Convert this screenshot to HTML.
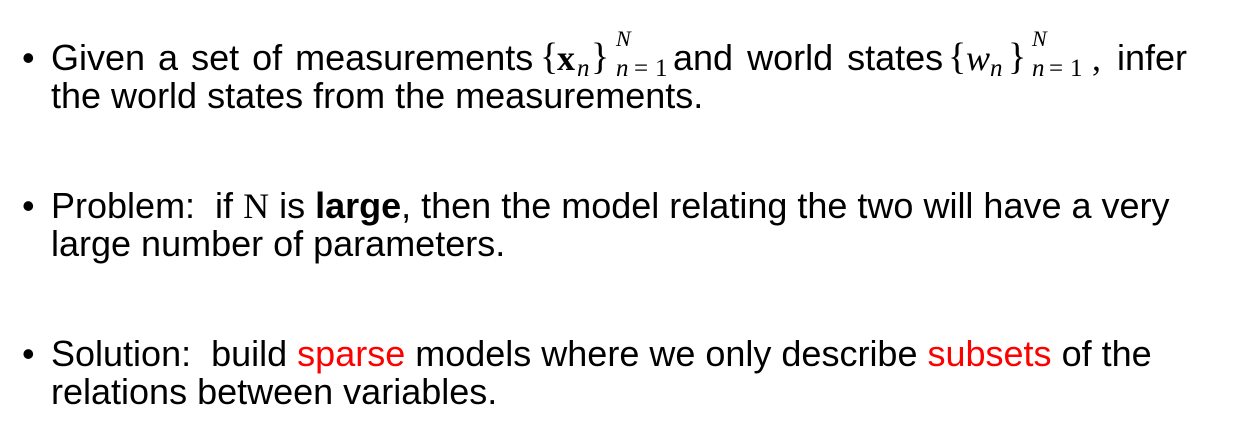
<!DOCTYPE html>
<html><head><style>
body{margin:0;width:1242px;height:431px;background:#fff;font-family:"Liberation Sans",Arial,sans-serif;font-size:36px;color:#000;position:relative;overflow:hidden}
.l,.a{position:absolute;white-space:nowrap;line-height:1}
.l{left:51px}
.b{position:absolute;left:22px;font-size:36px;line-height:1}
.m{font-family:"Liberation Serif",serif;}
.r{color:#ff0000}
.s{font-family:"Liberation Serif",serif;font-size:25px;position:absolute;line-height:1;white-space:nowrap}
.n{font-family:"Liberation Serif",serif;font-size:22px;position:absolute;line-height:1;font-style:italic}
</style></head><body>
<div class="b" style="top:40px">•</div>
<div class="l" style="top:40px;word-spacing:3px">Given a set of measurements</div>
<div class="a m" style="top:38px;left:540px;font-size:38px">{</div>
<div class="a m" style="top:40px;left:557px;font-weight:bold">x</div>
<div class="s" style="top:56px;left:577px;font-style:italic">n</div>
<div class="a m" style="top:38px;left:591px;font-size:38px">}</div>
<div class="n" style="top:28px;left:616px">N</div>
<div class="s" style="top:56px;left:616px;font-style:italic">n</div>
<div class="s" style="top:56px;left:634px">=</div>
<div class="s" style="top:56px;left:655px">1</div>
<div class="a" style="top:40px;left:673px;word-spacing:4px">and world states</div>
<div class="a m" style="top:38px;left:948px;font-size:38px">{</div>
<div class="a m" style="top:40px;left:966px;font-style:italic">w</div>
<div class="s" style="top:56px;left:990px;font-style:italic">n</div>
<div class="a m" style="top:38px;left:1008px;font-size:38px">}</div>
<div class="n" style="top:28px;left:1032px">N</div>
<div class="s" style="top:56px;left:1032px;font-style:italic">n</div>
<div class="s" style="top:56px;left:1049px">=</div>
<div class="s" style="top:56px;left:1070px">1</div>
<div class="a m" style="top:40px;left:1092px">,</div>
<div class="a" style="top:40px;left:1117px">infer</div>
<div class="l" style="top:78px">the world states from the measurements.</div>
<div class="b" style="top:188px">•</div>
<div class="l" style="top:188px">Problem:&nbsp; if <span class="m">N</span> is <b>large</b>, then the model relating the two will have a very</div>
<div class="l" style="top:226px">large number of parameters.</div>
<div class="b" style="top:336px">•</div>
<div class="l" style="top:336px">Solution:&nbsp; build <span class="r">sparse</span> models where we only describe <span class="r">subsets</span> of the</div>
<div class="l" style="top:374px">relations between variables.</div>
</body></html>
